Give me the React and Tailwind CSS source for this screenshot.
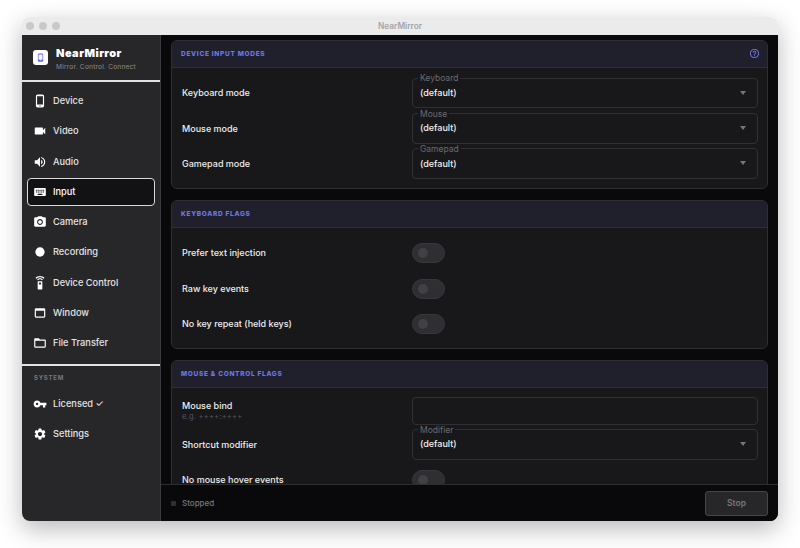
import {
  MdOutlinePhoneAndroid, MdVideocam, MdVolumeUp, MdKeyboard, MdPhotoCamera, MdFiberManualRecord,
  MdSettingsRemote, MdWebAsset, MdFolderOpen, MdVpnKey, MdSettings, MdOutlineHelpOutline, MdPhoneAndroid,
} from 'react-icons/md';

const NAV = [
  { label: 'Device', icon: MdOutlinePhoneAndroid },
  { label: 'Video', icon: MdVideocam },
  { label: 'Audio', icon: MdVolumeUp },
  { label: 'Input', icon: MdKeyboard, active: true },
  { label: 'Camera', icon: MdPhotoCamera },
  { label: 'Recording', icon: MdFiberManualRecord },
  { label: 'Device Control', icon: MdSettingsRemote },
  { label: 'Window', icon: MdWebAsset },
  { label: 'File Transfer', icon: MdFolderOpen },
];

function NavItem({ label, icon: Icon, active }) {
  return (
    <div className={`flex h-[28px] items-center gap-[6px] rounded-[4px] border pl-[5px] text-[9.25px] font-medium ${active ? 'border-[#d8d8d8] bg-[#121214] font-bold text-white' : 'border-transparent text-[#e4e4e4]'}`}>
      <Icon className="size-[14px] text-white" />
      <span>{label}</span>
    </div>
  );
}

function Card({ title, help, children }) {
  return (
    <section className="shrink-0 rounded-[6px] border border-[#2e2e33] bg-[#18181b]">
      <div className="flex h-[27px] items-center justify-between rounded-t-[6px] border-b border-[#2e2e33] bg-[#20202c] pl-[9px] pr-[7px]">
        <h2 className="pt-[2px] text-[6.5px] font-extrabold uppercase tracking-[0.11em] text-[#6d78e6]">{title}</h2>
        {help && <MdOutlineHelpOutline className="size-[11px] text-[#6d78e6]" />}
      </div>
      <div className="flex flex-col pb-[6.5px] pl-[10px] pr-[9px] pt-[8px]">{children}</div>
    </section>
  );
}

function Row({ label, hint, short, children }) {
  return (
    <div className={`flex items-center ${short ? 'h-[31px]' : 'h-[35.4px]'}`}>
      <div className="w-[230px] shrink-0">
        <div className="text-[9px] font-medium leading-[12px] text-[#eeeeee]">{label}</div>
        {hint && <div className="text-[7.5px] leading-[10px] tracking-[0.03em] text-[#55555a]">{hint}</div>}
      </div>
      <div className="flex-1">{children}</div>
    </div>
  );
}

function SelectField({ legend, value = '(default)' }) {
  return (
    <fieldset className="relative -mt-[4px] h-[34px] rounded-[4px] border border-[#303034] pl-[7px] pr-[11px]">
      <legend className="-ml-[2px] px-[2px] text-[8.5px] leading-[8px] text-[#6b6b70]">{legend}</legend>
      <div className="flex h-[21px] items-center justify-between">
        <span className="text-[9px] font-medium text-[#f0f0f0]">{value}</span>
        <span className="h-0 w-0 border-x-[3.5px] border-t-[4px] border-x-transparent border-t-[#77777a]" />
      </div>
    </fieldset>
  );
}

function Toggle() {
  return (
    <div className="flex h-[20px] w-[33px] items-center rounded-full border border-[#38383c] bg-[#2f2f33] pl-[5px]">
      <div className="size-[10px] rounded-full bg-[#414145]" />
    </div>
  );
}

export default function App() {
  return (
    <div className="h-[548px] w-[800px] overflow-hidden bg-white px-[22px] pb-[27px] pt-[17px] font-['Inter',sans-serif]">
      <div className="flex h-[504px] flex-col overflow-hidden rounded-[8px] shadow-[0_8px_24px_rgba(0,0,0,0.28)]">
        <header className="relative flex h-[18px] shrink-0 items-center justify-center bg-[#ebebec]">
          <div className="absolute left-[4px] flex gap-[5px]">
            <span className="size-[8px] rounded-full bg-[#c9c9cb]" />
            <span className="size-[8px] rounded-full bg-[#c9c9cb]" />
            <span className="size-[8px] rounded-full bg-[#c9c9cb]" />
          </div>
          <span className="text-[8.3px] font-semibold text-[#a5a5a7]">NearMirror</span>
        </header>

        <div className="flex min-h-0 flex-1">
          <aside className="flex w-[139px] shrink-0 flex-col border-r border-[#3c3c3f] bg-[#27272a]">
            <div className="flex h-[47px] shrink-0 items-center gap-[8px] border-b-2 border-[#e2e2e2] pl-[11px]">
              <div className="flex size-[15px] items-center justify-center rounded-[3px] bg-white">
                <MdPhoneAndroid className="size-[9px] text-[#4f5ce0]" />
              </div>
              <div className="pt-[2px]">
                <div className="text-[11px] font-black leading-[13px] tracking-[0.04em] text-white">NearMirror</div>
                <div className="mt-[3px] text-[6.6px] leading-[8px] tracking-[0.03em] text-[#8a8a8e]">Mirror. Control. Connect</div>
              </div>
            </div>

            <nav className="flex flex-col gap-[2.25px] px-[5px] pt-[5px]">
              {NAV.map((item) => <NavItem key={item.label} {...item} />)}
            </nav>

            <div className="mt-[7px] border-t-2 border-[#e2e2e2] pl-[12px] pt-[8px] text-[6px] font-bold leading-[8px] tracking-[0.13em] text-[#77777b]">SYSTEM</div>

            <div className="flex flex-col gap-[2px] px-[5px] pt-[8px]">
              <NavItem label="Licensed ✓" icon={MdVpnKey} />
              <NavItem label="Settings" icon={MdSettings} />
            </div>
          </aside>

          <main className="flex min-w-0 flex-1 flex-col bg-[#09090b]">
            <div className="flex min-h-0 flex-1 flex-col gap-[10.5px] overflow-hidden px-[10px] pt-[4.5px]">
              <Card title="Device Input Modes" help>
                <Row label="Keyboard mode"><SelectField legend="Keyboard" /></Row>
                <Row label="Mouse mode"><SelectField legend="Mouse" /></Row>
                <Row label="Gamepad mode"><SelectField legend="Gamepad" /></Row>
              </Card>

              <Card title="Keyboard Flags">
                <Row label="Prefer text injection"><Toggle /></Row>
                <Row label="Raw key events"><Toggle /></Row>
                <Row label="No key repeat (held keys)"><Toggle /></Row>
              </Card>

              <Card title="Mouse &amp; Control Flags">
                <Row short label="Mouse bind" hint="e.g. ++++:++++">
                  <div className="h-[28px] rounded-[4px] border border-[#303034]" />
                </Row>
                <Row label="Shortcut modifier"><SelectField legend="Modifier" /></Row>
                <Row label="No mouse hover events"><Toggle /></Row>
              </Card>
            </div>

            <footer className="flex h-[37px] shrink-0 items-center justify-between border-t border-[#2e2e31] bg-[#09090b] px-[10px]">
              <div className="flex items-center gap-[6px]">
                <span className="size-[5px] rounded-[1px] bg-[#2f2f32]" />
                <span className="text-[8px] font-medium text-[#77777b]">Stopped</span>
              </div>
              <button className="h-[25px] w-[63px] rounded-[3px] border border-[#46464a] bg-[#27272a] text-[8.5px] font-semibold text-[#77777b]">Stop</button>
            </footer>
          </main>
        </div>
      </div>
    </div>
  );
}
